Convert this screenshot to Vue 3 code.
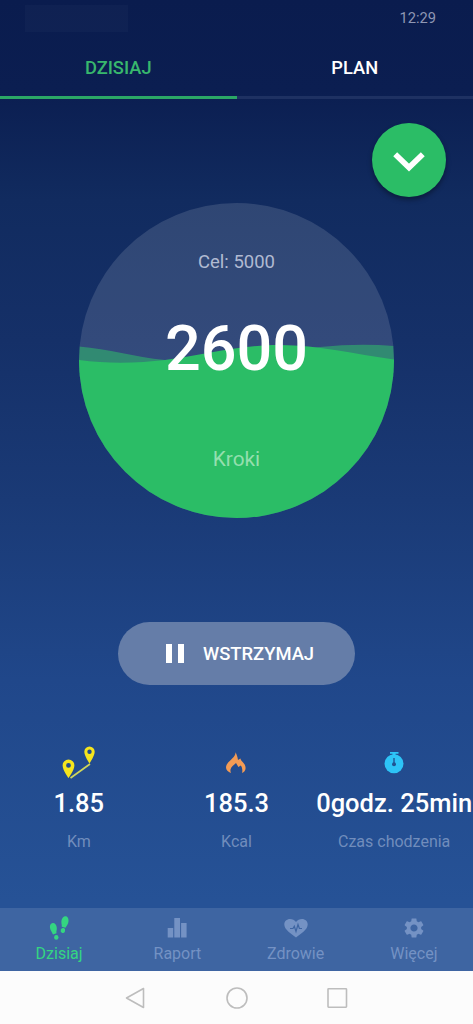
<script setup>
const tabs = [
  { label: 'DZISIAJ', active: true },
  { label: 'PLAN', active: false },
]
const stats = [
  { icon: 'route', value: '1.85', label: 'Km' },
  { icon: 'flame', value: '185.3', label: 'Kcal' },
  { icon: 'timer', value: '0godz. 25min', label: 'Czas chodzenia' },
]
const nav = [
  { icon: 'steps', label: 'Dzisiaj', active: true },
  { icon: 'bars', label: 'Raport' },
  { icon: 'heart', label: 'Zdrowie' },
  { icon: 'gear', label: 'Więcej' },
]
</script>

<template>
  <div class="screen">
    <header class="status">
      <span class="status-notice"></span>
      <time class="clock">12:29</time>
    </header>

    <nav class="tabs">
      <button v-for="t in tabs" :key="t.label" class="tab" :class="{ active: t.active }">{{ t.label }}</button>
    </nav>

    <main class="content">
      <button class="fab" aria-label="Rozwiń">
        <svg width="32" height="20" viewBox="0 0 32 20"><path d="M2.2 2.2 16 15.6 29.8 2.2" fill="none" stroke="#fff" stroke-width="5.600" /></svg>
      </button>

      <section class="goal">
        <svg class="waves" viewBox="0 0 315 315">
          <path d="M0 143.500C30 146 55 154 86 157C145 167 190 148 241 144Q280 140 315 143V170H0Z" fill="#2fbf69" fill-opacity=".55" />
          <path d="M0 157C30 161 60 160 86 157C125 152 160 142 201 142C240 142 275 151 315 156.500V315H0Z" fill="#2bbd66" />
        </svg>
        <span class="target">Cel: 5000</span>
        <strong class="count">2600</strong>
        <span class="unit">Kroki</span>
      </section>

      <button class="pause">
        <svg width="18" height="19" viewBox="0 0 18 19"><path d="M0 0H6V19H0ZM12 0H18V19H12Z" fill="#fff" /></svg>
        <span>WSTRZYMAJ</span>
      </button>

      <section class="stats">
        <div v-for="s in stats" :key="s.label" class="stat">
          <svg v-if="s.icon === 'route'" width="34" height="34" viewBox="0 0 34 34">
            <path d="M8.500 32 28 18" stroke="#cfd65b" stroke-width="1.700" />
            <path fill="#f6e51d" fill-rule="evenodd" d="M6.500 13.500A5.900 5.900 0 0 0 .600 19.400C.600 24 6.500 32 6.500 32S12.400 24 12.400 19.400A5.900 5.900 0 0 0 6.500 13.500ZM6.500 17A2.400 2.400 0 1 1 6.500 21.800A2.400 2.400 0 0 1 6.500 17ZM27.500 .600A5.200 5.200 0 0 0 22.300 5.800C22.300 10 27.500 17.500 27.500 17.500S32.700 10 32.700 5.800A5.200 5.200 0 0 0 27.500 .600ZM27.500 3.500A2.200 2.200 0 1 1 27.500 7.900A2.200 2.200 0 0 1 27.500 3.500Z" />
          </svg>
          <svg v-else-if="s.icon === 'flame'" width="34" height="34" viewBox="0 0 34 34">
            <path fill="#f39b55" d="M16.700 6.300C17.500 8.500 18.600 11 19 14L21.400 12.500C22 15.500 26.600 17.500 26.600 22C26.600 24.500 25 26.300 23 27C23.800 24.300 23.200 21.500 21.800 19.500L19.400 21L17 17C15 19 11.800 21 11.500 23.500C11.300 25 11.500 26 12 27C9 26 7 23.800 7 21.500C7 15.500 16.200 12.800 16.700 6.300Z" />
          </svg>
          <svg v-else width="34" height="34" viewBox="0 0 34 34">
            <path fill="#2dc4f7" d="M13 6H21.500V7.800H18.500V9H15.500V7.800H13Z" />
            <circle cx="17" cy="17.800" r="9.500" fill="#2dc4f7" />
            <path d="M17 12V17" stroke="#215493" stroke-width="1.400" />
            <circle cx="17" cy="18.300" r="2" fill="#215493" />
          </svg>
          <strong class="value">{{ s.value }}</strong>
          <span class="caption">{{ s.label }}</span>
        </div>
      </section>
    </main>

    <nav class="bottom">
      <a v-for="n in nav" :key="n.label" class="item" :class="{ active: n.active }">
        <svg v-if="n.icon === 'steps'" width="24" height="24" viewBox="-1.500 0 24 24" fill="currentColor">
          <path d="M16.400 .300C18.600-.300 20.300 1.800 20 5.200C19.800 8 18.200 9.600 17 11.800L13.200 10.800C13.600 8.800 12.500 7.500 13 4.600C13.400 2.200 14.700 .700 16.400 .300Z" />
          <ellipse cx="14.400" cy="14.500" rx="2.200" ry="2.500" transform="rotate(18 14.400 14.500)" />
          <path d="M4.300 7C2.200 7.200 1.100 9.200 1.500 12C1.900 14.600 3.600 16.200 4.500 18.500L8 17.200C7.500 15.300 8.700 13.800 8.200 11C7.800 8.600 6.300 6.800 4.300 7Z" />
          <ellipse cx="7.800" cy="21.400" rx="2.200" ry="2.400" />
        </svg>
        <svg v-else-if="n.icon === 'bars'" width="24" height="24" viewBox="0 0 24 24" fill="currentColor">
          <path d="M2.700 12H8.200V21.500H2.700ZM9.300 2H15V21.500H9.300ZM16.100 7H21.600V21.500H16.100Z" />
        </svg>
        <svg v-else-if="n.icon === 'heart'" width="24" height="24" viewBox="0 0 24 24">
          <path fill="currentColor" d="M12 21.500C7 17.500 .300 13.500 .300 8.400C.300 5.300 2.800 3 6 3C8.500 3 10.600 4.200 12 6C13.400 4.200 15.500 3 18 3C21.200 3 23.700 5.300 23.700 8.400C23.700 13.500 17 17.500 12 21.500Z" />
          <path d="M6 12.500H9L10.300 10.300L12 15.500L14 8.500L15.400 12.500H18" fill="none" stroke="#3e65a2" stroke-width="1.200" />
        </svg>
        <svg v-else width="24" height="24" viewBox="0 0 24 24" fill="currentColor">
          <path d="M19.140 12.940c.040-.300.060-.610.060-.940 0-.320-.020-.640-.070-.940l2.030-1.580c.180-.140.230-.410.120-.610l-1.920-3.320c-.120-.220-.370-.290-.590-.220l-2.390.960c-.500-.380-1.030-.700-1.620-.940L14.400 2.810c-.040-.240-.240-.410-.480-.410h-3.840c-.240 0-.430.170-.470.410l-.360 2.540c-.590.240-1.130.570-1.620.940l-2.390-.960c-.220-.080-.470 0-.590.220L2.740 8.870c-.120.210-.080.470.120.610l2.030 1.580c-.050.300-.090.630-.090.940s.020.640.070.940l-2.030 1.580c-.180.140-.230.410-.120.610l1.920 3.320c.120.220.370.290.590.220l2.390-.960c.500.380 1.030.700 1.620.940l.360 2.540c.050.240.240.410.480.410h3.840c.240 0 .440-.170.470-.410l.360-2.540c.590-.240 1.130-.560 1.620-.940l2.390.960c.220.080.470 0 .590-.220l1.920-3.320c.120-.220.070-.470-.120-.610l-2.010-1.580zM12 15.600c-1.980 0-3.600-1.620-3.600-3.600s1.620-3.600 3.600-3.600 3.600 1.620 3.600 3.600-1.620 3.600-3.600 3.600z" />
        </svg>
        <span>{{ n.label }}</span>
      </a>
    </nav>

    <footer class="system">
      <svg width="22" height="22" viewBox="0 0 22 22"><path d="M18.500 1.500V20.500L1.500 11Z" /></svg>
      <svg width="22" height="22" viewBox="0 0 22 22"><circle cx="11" cy="11" r="10" /></svg>
      <svg width="22" height="22" viewBox="0 0 22 22"><rect x="2" y="1.700" width="18.500" height="18.500" rx=".6" /></svg>
    </footer>
  </div>
</template>

<style>
body {
  margin: 0;
}
</style>

<style scoped>
.screen {
  width: 473px;
  height: 1024px;
  display: flex;
  flex-direction: column;
  overflow: hidden;
  font-family: Roboto, "Noto Sans", sans-serif;
  color: #fff;
  background: linear-gradient(#0a1c4e 0, #0b1e51 90px, #112b5f 200px, #153068 340px, #1a3a76 500px, #20478a 680px, #265296 900px, #265296);
}
button {
  font: inherit;
  color: inherit;
  border: 0;
  padding: 0;
  background: none;
}
.status {
  height: 36px;
  display: flex;
  justify-content: space-between;
  align-items: center;
  padding: 0 37px 0 25px;
}
.status-notice {
  width: 103px;
  height: 27px;
  background: rgba(255, 255, 255, .022);
}
.clock {
  font-size: 14.700px;
  color: #8f97b4;
}
.tabs {
  height: 63px;
  display: flex;
}
.tab {
  flex: 1;
  box-sizing: border-box;
  border-bottom: 3px solid #1e3162;
  padding-top: 3px;
  font-size: 18.300px;
  font-weight: 500;
  line-height: 57px;
}
.tab.active {
  color: #38b76d;
  border-color: #2ba866;
}
.content {
  flex: 1;
  display: flex;
  flex-direction: column;
  align-items: center;
}
.fab {
  align-self: flex-end;
  width: 74px;
  height: 74px;
  margin: 24px 27.500px 0 0;
  border-radius: 50%;
  background: #2bbd66;
  display: grid;
  place-items: center;
  padding-top: 3px;
  box-sizing: border-box;
  box-shadow: 0 3px 5px rgba(0, 0, 0, .35);
}
.goal {
  position: relative;
  width: 315px;
  height: 315px;
  margin-top: 5.500px;
  border-radius: 50%;
  overflow: hidden;
  background: rgba(255, 255, 255, .13);
  display: flex;
  flex-direction: column;
  align-items: center;
}
.waves {
  position: absolute;
  inset: 0;
}
.goal > span,
.goal > strong {
  position: relative;
}
.target {
  margin-top: 47px;
  font-size: 18.500px;
  line-height: 24px;
  color: #b0bad2;
}
.count {
  margin-top: 38px;
  font-size: 63px;
  line-height: 74px;
  font-weight: 500;
}
.unit {
  margin-top: 60px;
  font-size: 20.800px;
  line-height: 26px;
  color: #94dfae;
}
.pause {
  width: 237px;
  height: 63px;
  flex: none;
  margin-top: 104.500px;
  border-radius: 32px;
  background: #657da8;
  display: flex;
  align-items: center;
  justify-content: center;
  gap: 19px;
  padding-left: 7px;
  font-size: 18.400px;
  font-weight: 500;
}
.stats {
  width: 473px;
  margin-top: 61px;
  display: grid;
  grid-template-columns: repeat(3, 157.667px);
}
.stat {
  display: flex;
  flex-direction: column;
  align-items: center;
  white-space: nowrap;
}
.value {
  margin-top: 7px;
  font-size: 25.500px;
  line-height: 32px;
  font-weight: 500;
}
.caption {
  margin-top: 13px;
  font-size: 16px;
  line-height: 20px;
  color: #718dbc;
}
.bottom {
  height: 63px;
  display: grid;
  grid-template-columns: repeat(4, 1fr);
  background: #3e65a2;
}
.item {
  display: flex;
  flex-direction: column;
  align-items: center;
  padding-top: 8px;
  gap: 4px;
  font-size: 16px;
  line-height: 20px;
  color: #7492c4;
}
.item.active {
  color: #34d681;
}
.system {
  height: 53px;
  background: #fcfcfc;
  display: flex;
  align-items: center;
  justify-content: center;
  gap: 78.500px;
}
.system svg {
  fill: none;
  stroke: #bdbdbd;
  stroke-width: 1.600;
  stroke-linejoin: round;
}
</style>
